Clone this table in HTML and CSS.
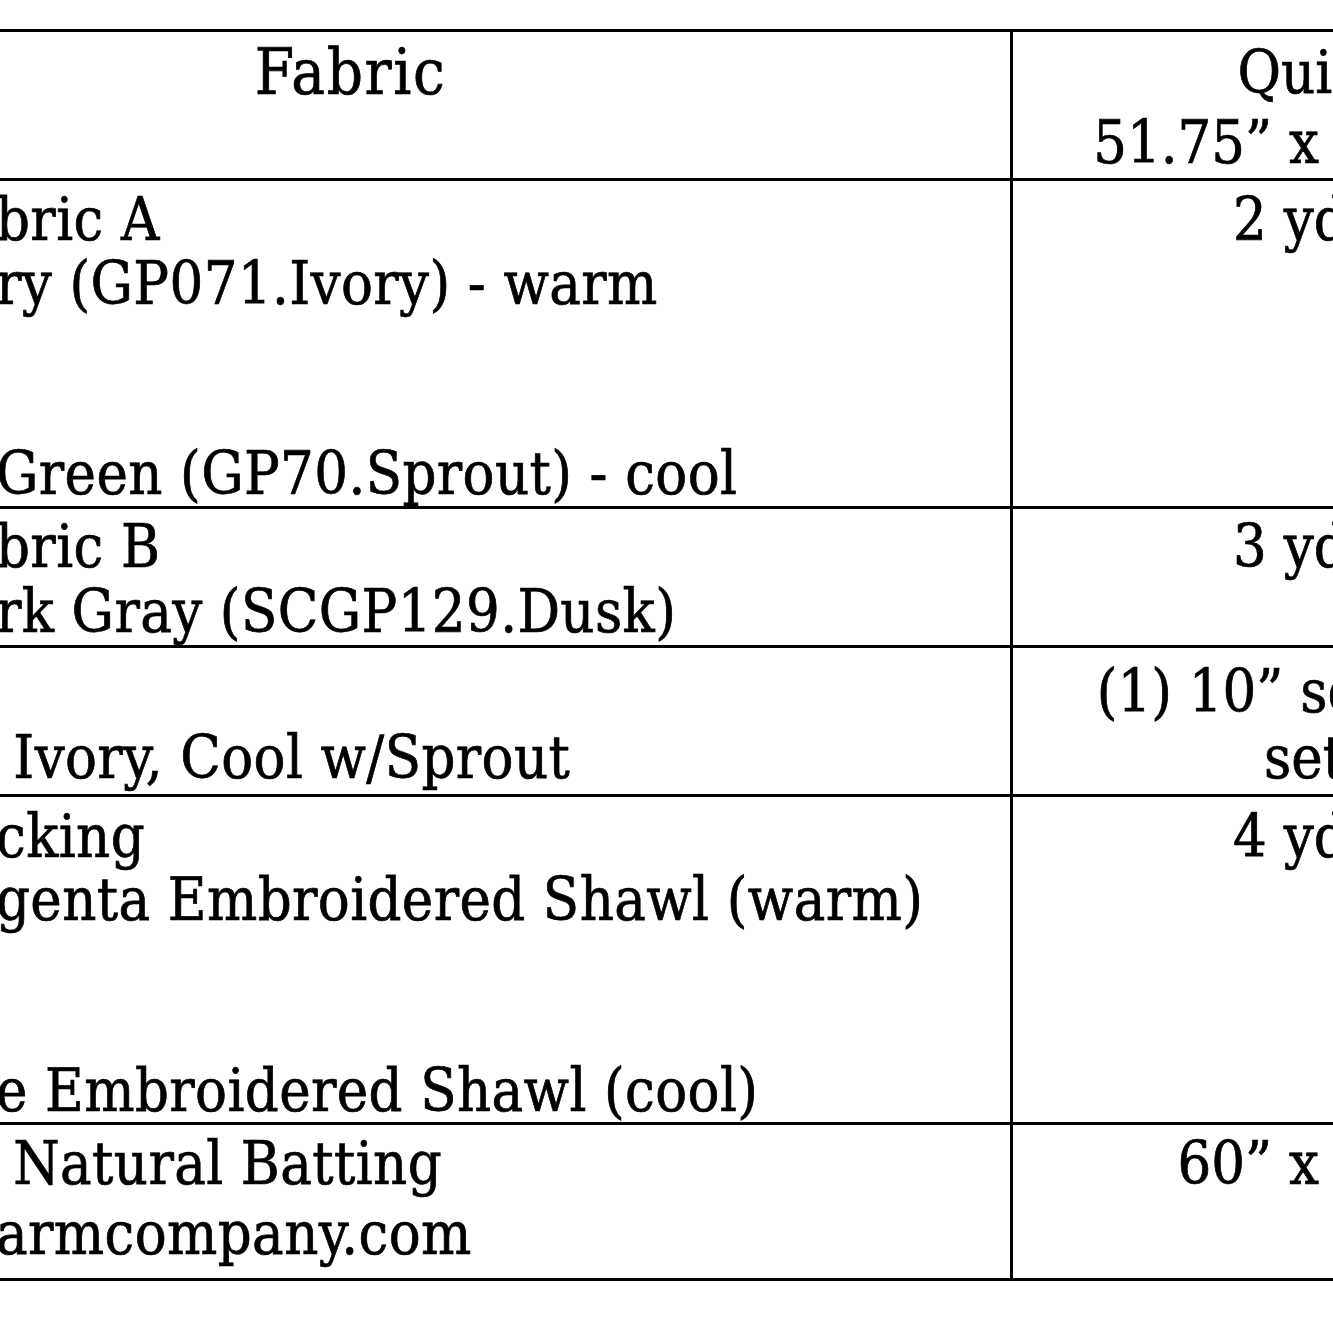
FILE: index.html
```html
<!DOCTYPE html>
<html lang="en">
<head>
<meta charset="utf-8">
<title>Fabric requirements</title>
<link rel="stylesheet" href="styles.css">
</head>
<body>
<div class="sheet">
  <div class="table">
    <div class="row head">
      <div class="cell fab">
        <div class="ln center title">Fabric</div>
        <div class="ln">&nbsp;</div>
      </div>
      <div class="cell qty">
        <div class="ln">Quilt</div>
        <div class="ln">51.75” x 51.75”</div>
      </div>
    </div>

    <div class="row r-tall r-a">
      <div class="cell fab">
        <div class="ln"><span class="pre">Fa</span>bric A</div>
        <div class="ln"><span class="pre">Ivo</span>ry (GP071.Ivory) - warm</div>
        <div class="ln">&nbsp;</div>
        <div class="ln">&nbsp;</div>
        <div class="ln">Green (GP70.Sprout) - cool</div>
      </div>
      <div class="cell qty">
        <div class="ln">2 yds</div>
      </div>
    </div>

    <div class="row r-two">
      <div class="cell fab">
        <div class="ln"><span class="pre">Fa</span>bric B</div>
        <div class="ln"><span class="pre">Da</span>rk Gray (SCGP129.Dusk)</div>
      </div>
      <div class="cell qty">
        <div class="ln">3 yds</div>
      </div>
    </div>

    <div class="row r-bind">
      <div class="cell fab">
        <div class="ln"><span class="pre">Binding</span>&nbsp;</div>
        <div class="ln"><span class="pre">Warm w/</span> Ivory, Cool w/Sprout</div>
      </div>
      <div class="cell qty">
        <div class="ln">(1) 10” squares</div>
        <div class="ln">set</div>
      </div>
    </div>

    <div class="row r-tall r-back">
      <div class="cell fab">
        <div class="ln"><span class="pre">Ba</span>cking</div>
        <div class="ln"><span class="pre">Ma</span>genta Embroidered Shawl (warm)</div>
        <div class="ln">&nbsp;</div>
        <div class="ln">&nbsp;</div>
        <div class="ln"><span class="pre">Blu</span>e Embroidered Shawl (cool)</div>
      </div>
      <div class="cell qty">
        <div class="ln">4 yds</div>
      </div>
    </div>

    <div class="row r-bat">
      <div class="cell fab">
        <div class="ln"><span class="pre">Warm &amp;</span> Natural Batting</div>
        <div class="ln"><span class="pre">www.w</span>armcompany.com</div>
      </div>
      <div class="cell qty">
        <div class="ln">60” x 60”</div>
      </div>
    </div>
  </div>
</div>
</body>
</html>
```

FILE: styles.css
```css
html, body {
  margin: 0;
  padding: 0;
  background: #ffffff;
  overflow: hidden;
}

body {
  width: 1333px;
  height: 1333px;
  color: #000000;
  font-family: "DejaVu Serif Condensed", "DejaVu Serif", serif;
  font-stretch: condensed;
  font-size: 59px;
  letter-spacing: 0.4px;
  -webkit-text-stroke: 0.7px #000;
}

.sheet {
  padding-top: 29px;
}

.table {
  display: flex;
  flex-direction: column;
  width: 1904px;
  margin-left: -309px;
  border-top: 3px solid #000;
}

.row {
  display: flex;
  border-bottom: 3px solid #000;
}

.cell {
  box-sizing: border-box;
}

.fab {
  width: 1322px;
  flex: none;
  border-right: 3px solid #000;
  padding-left: 305px;
}

.qty {
  flex: 1;
  text-align: center;
  letter-spacing: 0;
}

.ln {
  white-space: nowrap;
}

.center {
  text-align: center;
  margin-left: -305px;
}

.title {
  font-size: 63px;
  letter-spacing: 1.6px;
}

.pre {
  display: inline-block;
  width: 0;
  direction: rtl;
  white-space: nowrap;
}

/* row rhythm */
.head .cell {
  line-height: 70px;
  padding-top: 6px;
  padding-bottom: 0;
}

.r-tall .cell {
  line-height: 63.5px;
}

.r-a .cell {
  padding-top: 7px;
  padding-bottom: 0.5px;
}

.r-back .cell {
  padding-top: 8px;
  padding-bottom: 0;
}

.r-two .cell {
  line-height: 65px;
  padding-top: 5px;
  padding-bottom: 1px;
}

.r-bind .cell {
  line-height: 66px;
  padding-top: 10.5px;
  padding-bottom: 3px;
}

.r-bat .cell {
  line-height: 70px;
  padding-top: 4px;
  padding-bottom: 8.5px;
}
```
